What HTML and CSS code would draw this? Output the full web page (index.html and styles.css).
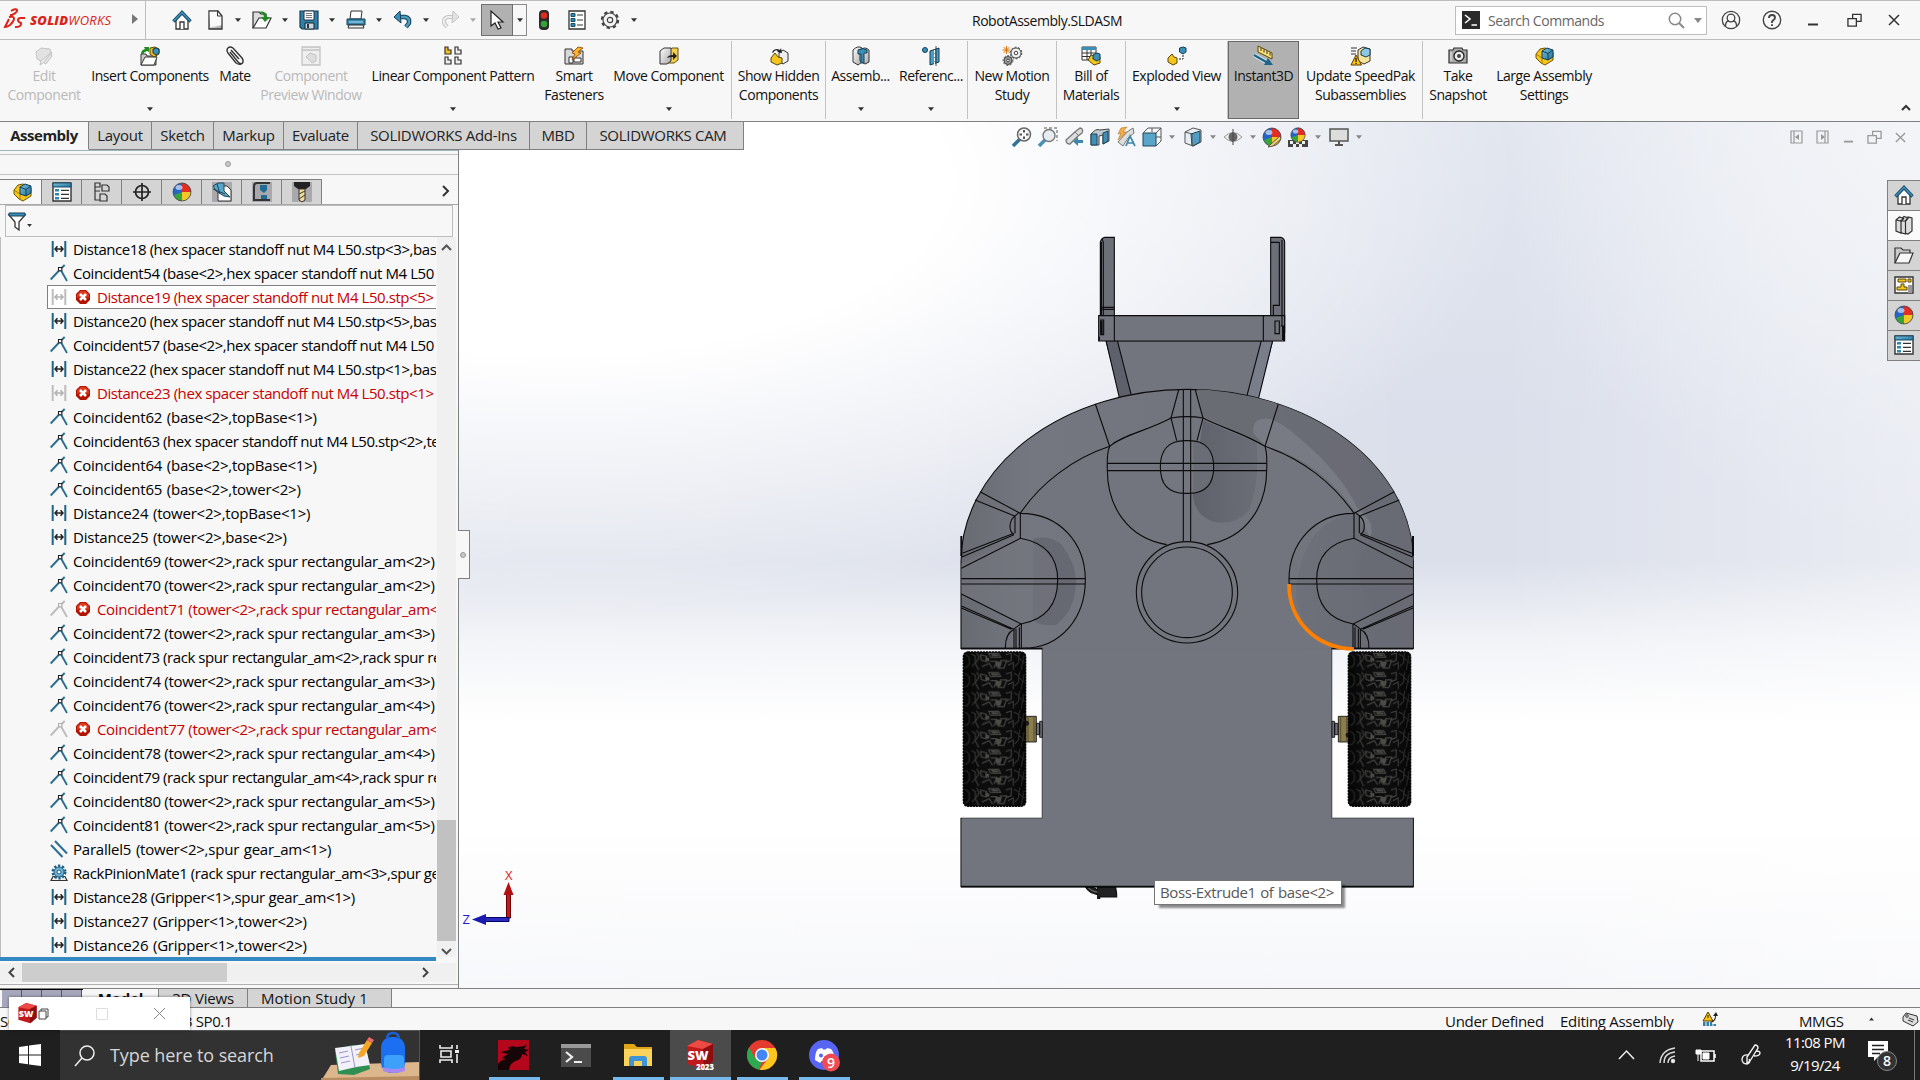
FILE: index.html
```html
<!DOCTYPE html>
<html lang="en">
<head>
<meta charset="utf-8">
<title>RobotAssembly.SLDASM</title>
<link rel="stylesheet" href="styles.css">
</head>
<body>
<svg class="defs" width="0" height="0">
  <defs>
    <linearGradient id="blue" x1="0" y1="0" x2="1" y2="1"><stop offset="0" stop-color="#7cc3e0"/><stop offset="1" stop-color="#1f6d94"/></linearGradient>
    <linearGradient id="steel" x1="0" y1="0" x2="1" y2="1"><stop offset="0" stop-color="#fff"/><stop offset="1" stop-color="#a8a8a8"/></linearGradient>
    <linearGradient id="body" x1="0" y1="0" x2="1" y2="0"><stop offset="0" stop-color="#696b73"/><stop offset=".15" stop-color="#74777f"/><stop offset=".6" stop-color="#71747c"/><stop offset="1" stop-color="#686a73"/></linearGradient>
    <linearGradient id="wheelshade" x1="0" y1="0" x2="1" y2="0"><stop offset="0" stop-color="#000" stop-opacity=".6"/><stop offset=".3" stop-color="#000" stop-opacity="0"/><stop offset=".7" stop-color="#000" stop-opacity="0"/><stop offset="1" stop-color="#000" stop-opacity=".6"/></linearGradient>
    <linearGradient id="ballshade" x1="0" y1="0" x2="1" y2="0"><stop offset="0" stop-color="#5d5f68" stop-opacity=".9"/><stop offset="1" stop-color="#686a73" stop-opacity=".7"/></linearGradient>
    <clipPath id="hull"><path d="M63 2000V1026A678.500 518 0 0 1 1420 1026V2000z"/></clipPath>
    <pattern id="tread" width="188" height="58" patternUnits="userSpaceOnUse">
      <rect width="188" height="58" fill="#0d0d0d"/>
      <g fill="none" stroke="#454543" stroke-width="3.500">
        <path d="M0 8h10l8 10v18l-8 10H0M24 6l12 6v20l-10 12M40 2l8 14-12 18 10 20M52 8l18 5v16l-16-4zM56 44l22-10 10 16M76 4h30l6 12H82zM112 26l-8 22h18l8-22zM82 28h18l-8 20M128 8l16-5v22l-14 5M134 40l16-8v22M152 6l14 8v18l-12 12M170 0l-4 18 12 10-4 26M188 12h-8v20h8"/>
      </g>
      <path d="M66 16l12 2v10l-12-2zM98 28l18 2-5 16-14-2zM84 6l20 1 3 6H86z" fill="#4b4b48"/>
    </pattern>
  </defs>
  <symbol id="dist" viewBox="0 0 18 18"><path d="M2.700 1v16M15.300 1v16" stroke="var(--m,#1d6587)" stroke-width="2"/><path d="M5 9h8M7.500 6.300 5 9l2.500 2.700M10.500 6.300 13 9l-2.500 2.700" fill="none" stroke="var(--n,#222)" stroke-width="1.500"/></symbol>
  <symbol id="coin" viewBox="0 0 18 18"><path d="M.7 15.500 10 5.500l4.700-4.500M10.500 5.500 17 17" stroke="var(--m,#2a6f92)" stroke-width="1.900" fill="none"/><path d="M8.500 3.500h3.300v3.300H8.500z" fill="#f7f7f7" stroke="var(--n,#222)" stroke-width="1.100"/></symbol>
  <symbol id="para" viewBox="0 0 18 18"><path d="m1 5 11.500 12M5 1l12 12.500" stroke="#2a6f92" stroke-width="2"/></symbol>
  <symbol id="rack" viewBox="0 0 18 18"><path d="M1 16.500h16l-2-4H3z" fill="#eee" stroke="#333" stroke-width="1.200"/><circle cx="9" cy="8" r="6" fill="none" stroke="#1f5f82" stroke-width="3" stroke-dasharray="2.200 1.600"/><circle cx="9" cy="8" r="5" fill="#6fb3d6" stroke="#1f5f82"/><circle cx="9" cy="8" r="2" fill="#f7f7f7" stroke="#1f5f82"/></symbol>
  <symbol id="err" viewBox="0 0 14 14"><path d="M4 0h6l4 4v6l-4 4H4l-4-4V4z" fill="#b31504"/><path d="M4.500 1h5L13 4.500v3H1v-3z" fill="#dc3a1c"/><path d="m4 4 6 6m0-6-6 6" stroke="#fff" stroke-width="2.600"/></symbol>
  <symbol id="down" viewBox="0 0 8 5"><path d="M0 0h8L4 5z" fill="currentColor"/></symbol>
  <symbol id="home" viewBox="0 0 20 20"><path d="M4 9v10h12V9l-6-6z" fill="#fff" stroke="#333" stroke-width="1.300"/><path d="M8 19v-7h4v7" fill="#fff" stroke="#333" stroke-width="1.300"/><path d="m1.500 11.500 8.500-9 8.500 9" fill="none" stroke="#1b4a66" stroke-width="3.400"/><path d="m1.800 11 8.200-8.600 8.200 8.600" fill="none" stroke="#3d8fb8" stroke-width="1.500"/></symbol>
  <symbol id="asm" viewBox="0 0 20 20"><path d="m2 8 4-5 5-1 8 4v8l-8 5-4-2-5-5z" fill="#f6c61c" stroke="#6d5300" stroke-width="1"/><path d="m2 8 6 4v6M8 12l3-2" fill="none" stroke="#a47c00"/><path d="m8 5 5-3 6 2v7l-5 3-6-2z" fill="url(#blue)" stroke="#123f58"/><path d="m8 5 6 2.500V14M14 7.500 19 4" stroke="#123f58" fill="none"/></symbol>
  <symbol id="ball" viewBox="0 0 20 20"><circle cx="10" cy="10" r="9" fill="#2463c8"/><path d="M10 10V1a9 9 0 0 1 9 9z" fill="#e32d22"/><path d="M10 10h9a9 9 0 0 1-9 9z" fill="#f4c62a"/><path d="M10 10v9a9 9 0 0 1-8-6z" fill="#37a53a"/><ellipse cx="7" cy="5.500" rx="3.500" ry="2.500" fill="#fff" opacity=".6"/><circle cx="10" cy="10" r="9" fill="none" stroke="#444" stroke-width=".8"/></symbol>
  <symbol id="list" viewBox="0 0 20 20"><path d="M1 1h18v18H1z" fill="#fff" stroke="#333" stroke-width="1.400"/><path d="M1 1h18v4H1z" fill="url(#blue)" stroke="#174f6d"/><path d="M3 7h4v2.500H3zM3 11h4v2.500H3zM3 15h4v2.500H3z" fill="#2f86b0"/><path d="M9 8.300h8M9 12.300h8M9 16.300h8" stroke="#333" stroke-width="1.200"/></symbol>
  <symbol id="folder" viewBox="0 0 20 20"><path d="M1 18V3h6l2 2h7v3" fill="#c9c9c9" stroke="#333" stroke-width="1.200"/><path d="m1 18 5-10h13l-4 10z" fill="#f8f8f8" stroke="#333" stroke-width="1.200"/></symbol>
  <symbol id="cyl" viewBox="0 0 20 20"><path d="M2 4q5-5 9-2v14l-4 3-5-3z" fill="url(#steel)" stroke="#333"/><path d="M9 4q5-4 9 0v12l-4 2-5-3z" fill="url(#steel)" stroke="#333"/></symbol>
  <symbol id="gear" viewBox="0 0 20 20"><circle cx="10" cy="10" r="8" fill="none" stroke="#444" stroke-width="2.400" stroke-dasharray="3.300 3"/><circle cx="10" cy="10" r="7" fill="#f4f4f4" stroke="#444" stroke-width="1.200"/><circle cx="10" cy="10" r="2.700" fill="none" stroke="#444" stroke-width="1.200"/></symbol>
  <symbol id="restore" viewBox="0 0 16 16"><path d="M1 6h9v8H1zM6 6V1.500h9V9h-5" fill="none" stroke="currentColor" stroke-width="1.400"/></symbol>
  <symbol id="cross" viewBox="0 0 12 12"><path d="m1 1 10 10M11 1 1 11" stroke="currentColor" stroke-width="1.500"/></symbol>
  <symbol id="minus" viewBox="0 0 12 12"><path d="M1 10.500h10" stroke="currentColor" stroke-width="2"/></symbol>
</svg>

<header class="titlebar">
  <div class="brand">
    <svg width="21" height="22" viewBox="0 0 21 22"><path d="M6 3q5-3 6-1t-5 5h-2M4 9q5-1 5 1.500T5 17q-3 2-5 2l4-8M20 10h-4q-3 0-3 2t3 3q1 4-6 4" fill="none" stroke="#da2419" stroke-width="2"/></svg>
    <span class="logo"><b>SOLID</b>WORKS</span>
    <svg class="play" width="6" height="10" viewBox="0 0 6 10"><path d="M0 0v10l6-5z" fill="#777"/></svg>
  </div>
  <nav class="qat">
    <svg class="i"><use href="#home"/></svg>
    <svg class="i" viewBox="0 0 20 20"><path d="M4 1h9l4 5v13H4z" fill="url(#steel)" stroke="#333" stroke-width="1.300"/><path d="M4.700 1.700h7.500l4 4.500v9l-11 2z" fill="#fafafa"/><path d="M12.500 1v5H17" fill="none" stroke="#333"/></svg><svg class="d"><use href="#down"/></svg>
    <svg class="i" viewBox="0 0 20 20"><path d="M1 18V2h6l2 2h5v4" fill="#ddd" stroke="#333" stroke-width="1.200"/><path d="m1 18 6-10h12l-5 10z" fill="#fff" stroke="#333" stroke-width="1.200"/><path d="M6 2q8-2 9 5h3l-5 5-4-5h3q0-4-6-5" fill="#1f8a1f"/></svg><svg class="d"><use href="#down"/></svg>
    <svg class="i" viewBox="0 0 20 20"><path d="M1 1h18v18H3l-2-2z" fill="#2f7fa6" stroke="#123f58" stroke-width="1.200"/><path d="M5 1h10v9H5z" fill="#fff" stroke="#234"/><path d="M7 3.500h6M7 5.500h6M7 7.500h6" stroke="#777"/><path d="M6 13h9v6H6z" fill="#cfd8dd" stroke="#123"/><path d="M8 14h2v4H8z" fill="#234"/></svg><svg class="d"><use href="#down"/></svg>
    <svg class="i" viewBox="0 0 20 20"><path d="M5 1h11l-1 8H4z" fill="#fff" stroke="#333"/><path d="M1 9h18v6H1z" fill="#3585ad" stroke="#123f58"/><path d="M3 12h14" stroke="#bfe3f3"/><path d="M3 15h14l1 3H2z" fill="#eee" stroke="#333"/></svg><svg class="d"><use href="#down"/></svg>
    <svg class="i" viewBox="0 0 20 20"><path d="M5 7h7q5 1 4 6l-3 4" fill="none" stroke="#153f58" stroke-width="4.500"/><path d="M5 7h7q5 1 4 6l-3 4" fill="none" stroke="#4a9cc4" stroke-width="2.500"/><path d="M1 7 7 1l1 12z" fill="#3b8eb6" stroke="#153f58"/></svg><svg class="d"><use href="#down"/></svg>
    <svg class="i" viewBox="0 0 20 20"><path d="M15 7H8q-5 1-4 6l3 4" fill="none" stroke="#c4c4c4" stroke-width="4"/><path d="M15 7H8q-5 1-4 6l3 4" fill="none" stroke="#eee" stroke-width="2"/><path d="m19 7-6-6-1 12z" fill="#e2e2e2" stroke="#c4c4c4"/></svg><svg class="d dim"><use href="#down"/></svg>
    <span></span>
    <span class="select"><svg width="14" height="20" viewBox="0 0 14 20"><path d="M1 1v15l4-3 3 6 3-1-3-6h5z" fill="#fff" stroke="#222" stroke-width="1.200"/></svg></span>
    <span class="selectmore"><svg class="d"><use href="#down"/></svg></span>
    <svg class="i" viewBox="0 0 20 20"><rect x="5" y="0" width="10" height="20" rx="4" fill="#2a2a2a"/><circle cx="10" cy="5.500" r="3.300" fill="#e02c1d"/><circle cx="10" cy="14" r="3.300" fill="#33a336"/></svg>
    <svg class="i" viewBox="0 0 20 20"><path d="M2 1h16v18H2z" fill="#fff" stroke="#333" stroke-width="1.300"/><path d="M4 3.500h4v3H4zM4 8.500h4v3H4zM4 13.500h4v3H4z" fill="#2f86b0" stroke="#174f6d"/><path d="M10 5h6M10 10h6M10 15h6" stroke="#333"/></svg>
    <svg class="i"><use href="#gear"/></svg><svg class="d"><use href="#down"/></svg>
  </nav>
  <h1 class="doc">RobotAssembly.SLDASM</h1>
  <div class="search">
    <svg width="18" height="18" viewBox="0 0 18 18"><path d="M0 0h18v18H0z" fill="#2a2a2a"/><path d="m3 4 5 4-5 4M9.500 14H15" fill="none" stroke="#fff" stroke-width="1.600"/></svg>
    <span>Search Commands</span>
    <svg width="17" height="17" viewBox="0 0 17 17"><circle cx="7" cy="7" r="5.700" fill="none" stroke="#888" stroke-width="1.500"/><path d="m11 11 5 5" stroke="#888" stroke-width="2"/></svg>
    <svg class="d grey"><use href="#down"/></svg>
  </div>
  <div class="winctl">
    <svg width="20" height="20" viewBox="0 0 20 20" fill="none" stroke="#444" stroke-width="1.300"><circle cx="10" cy="10" r="8.700"/><circle cx="10" cy="8" r="3.800"/><path d="M4.500 16q0-5 3.500-5M15.500 16q0-5-3.500-5"/></svg>
    <svg width="20" height="20" viewBox="0 0 20 20" fill="none" stroke="#444" stroke-width="1.400"><circle cx="10" cy="10" r="8.700"/><path d="M7 8q0-3 3-3t3 2.500q0 1.500-1.500 2.500T10 12v1M10 14.200v1.700" stroke-width="1.900"/></svg>
    <svg width="14" height="12"><use href="#minus"/></svg>
    <svg width="15" height="15"><use href="#restore"/></svg>
    <svg width="12" height="12"><use href="#cross"/></svg>
  </div>
</header>

<section class="ribbon">
  <div class="cmd off"><svg class="i" viewBox="0 0 20 20"><path d="m2 6 5-4 9 1 2 7-6 8-9-5z" fill="#e2e2e2" stroke="#c6c6c6"/><path d="m18 6-9 11-3 2 1-4z" fill="#f3f3f3" stroke="#c0c0c0"/></svg><span>Edit<br>Component</span></div>
  <div class="cmd"><svg class="i" viewBox="0 0 20 20"><path d="M1 19V8h5l1 2h9v9z" fill="#ccc" stroke="#333"/><path d="m1 19 4-8h12l-3 8z" fill="#fff" stroke="#333"/><path d="M1 8q0-4 4-5l-1-2h5v5L7 5Q4 6 3 8z" fill="#1f8a1f"/><path d="m10 2 5-1 4 2v5l-5 3-4-3z" fill="#f0bd1a" stroke="#5b4600"/><path d="m13 3 3-1 3 1v4l-3 2-3-2z" fill="#3b8eb6" stroke="#123f58"/></svg><span>Insert Components</span><svg class="d"><use href="#down"/></svg></div>
  <div class="cmd"><svg class="i" viewBox="0 0 20 20"><path d="m5 6 8 10q3 3 4.500 1t-.5-5L8 2Q5 0 3 2t0 5l8 10q3 2 5 1M6 4l8 9" fill="none" stroke="#333" stroke-width="1.400"/></svg><span>Mate</span></div>
  <div class="cmd off"><svg class="i" viewBox="0 0 20 20"><path d="M1 1h18v18H1zM1 4h18" fill="#eee" stroke="#c4c4c4" stroke-width="1.300"/><path d="m5 11 4-4 6 2v6l-4 2z" fill="#ddd" stroke="#c4c4c4"/></svg><span>Component<br>Preview Window</span></div>
  <div class="cmd"><svg class="i" viewBox="0 0 20 20" fill="#eee" stroke="#333" stroke-width="1.200"><path d="M2 1h3v3h3v4H2z" fill="#f3c51e"/><path d="M12 1h3v3h3v4h-6zM2 11h3v3h3v4H2zM12 11h3v3h3v4h-6z"/></svg><span>Linear Component Pattern</span><svg class="d"><use href="#down"/></svg></div>
  <div class="cmd"><svg class="i" viewBox="0 0 20 20"><path d="M1 3h7v2h11v13H1z" fill="#d8d8d8" stroke="#333"/><path d="M5 11h4v6H5zM10 12h7v4h-7z" fill="#fff" stroke="#333"/><path d="m14 1 5 1-5 4 3 1-9 7 3-6-3-1z" fill="#f7b52a" stroke="#8c3c00" stroke-width=".8"/></svg><span>Smart<br>Fasteners</span></div>
  <div class="cmd sep"><svg class="i" viewBox="0 0 20 20"><path d="m9 5 4-3h6v12l-4 3H9z" fill="#f4cf58" stroke="#6b5300"/><path d="m1 5 4-3h7v13l-4 3H1z" fill="url(#steel)" stroke="#333"/><path d="M8 12q1-3 6-3V6l4 4-4 4v-3q-4 0-6 1" fill="#222"/></svg><span>Move Component</span><svg class="d"><use href="#down"/></svg></div>
  <div class="cmd sep"><svg class="i" viewBox="0 0 20 20"><path d="m10 7 4-3 5 3v8l-5 3-4-3z" fill="#eee" stroke="#333"/><path d="m2 12 4-5 3 4 4 1v5l-5 2-6-3z" fill="#f3c51e" stroke="#5b4600"/><path d="M3 6q3-5 8-2l1-2 1 5-5-1 1-1Q6 3 4 7z" fill="#222"/></svg><span>Show Hidden<br>Components</span></div>
  <div class="cmd"><svg class="i" viewBox="0 0 20 20"><use href="#cyl"/><path d="M7 4q5-3 9 0v3h-3v10h-3V8H7z" fill="#3b8eb6" stroke="#123f58"/></svg><span>Assemb...</span><svg class="d"><use href="#down"/></svg></div>
  <div class="cmd sep"><svg class="i" viewBox="0 0 20 20"><circle cx="4" cy="4" r="2.500" fill="#3b8eb6" stroke="#123f58"/><path d="m9 5 9-3v14l-9 3z" fill="#4a9cc4" stroke="#123f58"/><path d="M13.500 0v20" stroke="#fff" stroke-dasharray="3 1"/><path d="M15 0v20" stroke="#222" stroke-width=".8"/></svg><span>Referenc...</span><svg class="d"><use href="#down"/></svg></div>
  <div class="cmd sep"><svg class="i" viewBox="0 0 20 20"><path d="M4.500 0v8M.5 4h8M1.700 1.200l5.600 5.600M7.300 1.200 1.700 6.800" stroke="#d8750f"/><g fill="none" stroke="#444"><circle cx="14" cy="7" r="5" fill="#f4f4f4"/><circle cx="14" cy="7" r="5.800" stroke-dasharray="2 1.600"/><circle cx="14" cy="7" r="1.800"/><circle cx="6" cy="14.500" r="4" fill="#999"/><circle cx="6" cy="14.500" r="4.900" stroke-dasharray="2 1.600"/><circle cx="6" cy="14.500" r="1.300" fill="#fff"/></g></svg><span>New Motion<br>Study</span></div>
  <div class="cmd sep"><svg class="i" viewBox="0 0 20 20"><path d="M1 1h14v13H1z" fill="#fff" stroke="#333"/><path d="M1 1h14v3H1z" fill="#3b8eb6"/><path d="M1 7h14M1 10.500h14M6 4v10M10 4v10" stroke="#333"/><path d="m7 14 3-5 9 2v6l-6 2z" fill="#f3c51e" stroke="#5b4600"/><path d="m12 9 4-2 3 1v5l-3 2-4-2z" fill="#3b8eb6" stroke="#123f58"/></svg><span>Bill of<br>Materials</span></div>
  <div class="cmd sep"><svg class="i" viewBox="0 0 20 20"><path d="m1 12 4-4 2 3 3 1v5l-4 2-5-3z" fill="#f3c51e" stroke="#5b4600"/><path d="m12.500 2 3.500-1 3 1v4l-3 2-3.500-2z" fill="#3b8eb6" stroke="#123f58"/><path d="M16 9v4h-5" stroke="#222" fill="none" stroke-dasharray="2 1"/></svg><span>Exploded View</span><svg class="d"><use href="#down"/></svg></div>
  <div class="cmd on"><svg class="i" viewBox="0 0 20 20"><path d="m4 0 14 7v6L4 6z" fill="#f8e27a" stroke="#5b4600"/><path d="M7 2v3M10 3.500v3M13 5v3M16 6.500v3" stroke="#333"/><path d="m0 9 14 8" stroke="#dff0f8" stroke-width="4"/><path d="m0 9 14 8" stroke="#1e6488" stroke-width="2.500"/><path d="m14 12 5 7h-9z" fill="#1e6488"/></svg><span>Instant3D</span></div>
  <div class="cmd sep"><svg class="i" viewBox="0 0 20 20"><path d="M0 2h6M0 5h5M0 8h5" stroke="#333"/><path d="m7 4 5-3 7 2v12l-6 3-6-3z" fill="#f7e39a" stroke="#333"/><path d="m10 5 4-3 5 1v6l-4 2-5-2z" fill="#8cc8e4" stroke="#123f58"/><path d="m5 9 5.500 10H0z" fill="#f9c513" stroke="#5b3600"/><path d="M5 12v4M5 17v1" stroke="#222" stroke-width="1.400"/></svg><span>Update SpeedPak<br>Subassemblies</span></div>
  <div class="cmd"><svg class="i" viewBox="0 0 20 20"><path d="M1 4h4l1-2h8l1 2h4v13H1z" fill="#aaa" stroke="#333" stroke-width="1.200"/><circle cx="11" cy="10" r="5" fill="#eee" stroke="#222" stroke-width="1.300"/><circle cx="11" cy="10" r="2" fill="#444"/><path d="M3 6v9" stroke="#eee"/></svg><span>Take<br>Snapshot</span></div>
  <div class="cmd"><svg class="i"><use href="#asm"/></svg><span>Large Assembly<br>Settings</span></div>
  <div class="collapse"><svg width="10" height="7" viewBox="0 0 10 7"><path d="m1 6 4-4 4 4" fill="none" stroke="#333" stroke-width="2"/></svg></div>
</section>

<main class="work">
  <svg class="scene" viewBox="0 122 1920 866" width="1920" height="866">
    <g transform="translate(940 220) scale(.33333)" fill="none" stroke="#0c0c0e" stroke-width="3.300">
      <g fill="#6d6f78">
        <path d="M481 290V66q4-12 14-14h28v238zM992 290V52h30q12 4 12 14v270l-42-10z"/>
        <path d="M498 362h500l-46 172H542z" fill="#72757d"/>
        <path d="M498 362h34l46 180-36 8z" fill="#5e606b"/><path d="M998 362h-34l-47 180 35 8z" fill="#7a7d8a"/>
        <path d="M476 287h558v76H476z" fill="#72757d"/>
      </g>
      <path d="M490 66v220M486 56l5 14M481 268h42M481 262h42M1018 66v190h-18v30M1026 60v260M992 67h26M523 287v76M970 287v76M482 300h9v44h-9zM1005 303h13v38h-13zM1022 318h12M1028 320v40M478 350v12" />
      <path d="M483 66v222M1032 318v44M485 302v40" stroke-width="6"/>
      <path d="M63 2000V1795h244V1285H63V1026A678.500 518 0 0 1 1420 1026V1285H1175V1795h245v205z" fill="url(#body)"/>
      <path d="M307 1285h868v510h243v203H65v-203h242z" fill="#72757e" stroke="none"/>
      <g clip-path="url(#hull)" stroke="none">
        <path d="M241 880Q350 730 509 680q62-20 232-90 150 60 234 88 160 50 272 202-160 20-180 240 20 165 174 165H241Q430 1270 436 1080 420 910 241 880z" fill="#72757d"/>
        <path d="M770 500l20 90q30 10 185 90l40-130V500z" fill="#6a6c74"/>
        <path d="M1015 540q250 90 405 280v465h-162q60-20 55-90-60-90-60-170 60-90 40-130Q1160 740 975 680z" fill="#696b74" opacity=".75"/>
        <path d="M940 640q-5-50 50-44 30 10 60 35 150 120 200 230 60 50 40 90l-40-70q-110-160-275-203z" fill="#787b83"/>
        <path d="M790 600q90 40 160 68 10 130-25 205-40 45-105 32-60-20-62-90z" fill="url(#ballshade)"/>
        <circle cx="741" cy="741" r="80" fill="#74777f"/>
        <path d="M760 665q60 10 62 76-2 60-62 78z" fill="#6b6d76"/>
        <path d="M280 955q55-10 85 20 40 50 43 105 0 90-60 135-60 5-70-20z" fill="#63656f" opacity=".8"/>
        <path d="M64 1030l175-75q110 30 114 125 0 110-110 130L64 1120z" fill="#74777f" opacity=".6"/>
      </g>
      <path d="M466 552l43 127q-9 20-7 70c0 110 60 205 178 225M1015 552l-40 127q7 20 5 70c0 110-60 205-178 225"/>
      <path d="M509 679c40-35 110-45 184-85q50-8 96 0c70 35 120 45 186 85M241 880C300 790 400 715 509 679M1242 880C1180 790 1085 715 975 679"/>
      <path d="M716 510l-23 84 17 68M766 510l23 84-18 68M730 508v455M752 508v455M502 730h478M502 752h478"/>
      <path d="M735 662h12c50 0 74 30 74 79 0 50-24 79-74 79h-12c-50 0-74-29-74-79 0-49 24-79 74-79z"/>
      <circle cx="741" cy="1117" r="152"/><circle cx="741" cy="1117" r="136"/>
      <g id="pod">
        <path d="M120 815l121 65C360 880 436 970 436 1080c0 110-70 205-188 205M105 840l117 47"/>
        <path d="M225 885v55M241 880v75M235 880q-25 15-25 38 0 20 12 25M67 1000l155-60M64 1012l158-68M64 1045l177-90q112 20 112 125 0 112-110 132M64 1076h372M64 1092h372"/>
        <path d="M64 1122l180 90v73M64 1158l158 70v57M220 1228l22-16M222 1228q-26 12-26 57M64 1164l150 64M228 1226v59M238 1222v63"/>
      </g>
      <use href="#pod" transform="translate(1483 0) scale(-1 1)"/>
      <path d="M64 948v60M1419 948v60" stroke-width="6"/>
      <path d="M63 1286h244M1175 1286h245M63 2000h1357" stroke-width="5"/>
      <path d="M1047 1092c0 110 80 192 195 195" stroke="#ff8000" stroke-width="11"/>
      <g stroke-width="2.500">
        <path d="M256 1489h33v77h-33zM1195 1489h33v77h-33z" fill="#8c7d4e"/>
        <path d="M264 1489v77M282 1489v77M1202 1489v77M1220 1489v77" stroke="#4d4424"/>
        <circle cx="260" cy="1510" r="6" fill="#222"/><circle cx="1224" cy="1545" r="6" fill="#222"/>
        <path d="M289 1510h10v34h-10zM299 1504h8v48h-8zM1184 1510h10v34h-10zM1176 1504h8v48h-8z" fill="#6d7075"/>
      </g>
      <g stroke="#0a0a0a" stroke-width="4" stroke-dasharray="7 2">
        <g transform="translate(70 1296)"><rect width="187" height="463" rx="14" fill="url(#tread)"/><rect width="187" height="463" rx="14" fill="url(#wheelshade)" stroke="none"/></g>
        <g transform="translate(1225 1296)"><rect width="187" height="463" rx="14" fill="url(#tread)"/><rect width="187" height="463" rx="14" fill="url(#wheelshade)" stroke="none"/></g>
      </g>
      <path d="M437 2002q10 18 36 22v11h6v-4h51v-10l-3-19h-54v8q-10-6-14-8z" fill="#222"/><path d="M446 2004q8 10 26 12" stroke="#777"/>
    </g>
    <path d="M506.500 918v-26h4v26z" fill="#c41a1a" stroke="#600"/><path d="m508.500 882 5 13h-10z" fill="#b01010"/>
    <path d="M509 917.500h-24v4h24z" fill="#2a2ac0" stroke="#006"/><path d="m472 919.500 14-5.500v11z" fill="#1a1ab0"/>
    <text x="505" y="880" class="axis" fill="#e02020">X</text><text x="462.500" y="924" class="axis" fill="#2020d0">Z</text>
  </svg>
  <div class="toprow">
    <nav class="tabs"><b>Assembly</b><span>Layout</span><span>Sketch</span><span>Markup</span><span>Evaluate</span><span>SOLIDWORKS Add-Ins</span><span>MBD</span><span class="cam">SOLIDWORKS CAM</span></nav>
    <div class="hud">
      <svg class="i" viewBox="0 0 20 20"><path d="m1 19 7-7" stroke="#2f7399" stroke-width="3.500"/><circle cx="12" cy="7.500" r="6.500" fill="#f6f6f6" stroke="#666" stroke-width="1.500"/><path d="M12 3v9M7.500 7.500h9" stroke="#555" stroke-width="2" stroke-dasharray="2.500 4"/></svg>
      <svg class="i" viewBox="0 0 20 20"><path d="M6 1h13v13" fill="none" stroke="#555" stroke-dasharray="3 2"/><path d="m1 19 6-6" stroke="#4a8fb5" stroke-width="3.500"/><circle cx="11" cy="8.500" r="6" fill="#e6edf2" stroke="#777" stroke-width="1.400"/></svg>
      <svg class="i" viewBox="0 0 20 20"><path d="m2 13 10-9 4-3q4 1 2 5l-4 3-8 8q-4 0-4-4z" fill="#ddd" stroke="#777" stroke-width="1.300"/><path d="m11 5 4 4" stroke="#777"/><path d="M19 16h-5v3l-5-4.500 5-4.500v3h5z" fill="#3f86ab"/></svg>
      <svg class="i" viewBox="0 0 20 20"><path d="M1 7q5-6 9-4l9-1v12l-6 3v-9L9 9v9H1z" fill="#bfcbd3" stroke="#444"/><path d="M1 7h6v11H1zM13 6l5-2v10l-5 3z" fill="#3f8fb8" stroke="#245"/></svg>
      <svg class="i" viewBox="0 0 20 20"><path d="m2 15 9-10 6-4 1 5-6 5-5 8z" fill="#ddd" stroke="#777"/><path d="m5 1 6-1-4 5 4 0-9 8 3-7-3 1z" fill="#f3b04a" stroke="#b07020" stroke-width=".6"/><path d="m10 19 4-10 5 10M12 16h5" fill="none" stroke="#3f86ab" stroke-width="1.700"/></svg>
      <svg class="i" viewBox="0 0 20 20"><path d="M1 6h13v13H1z" fill="#5aa6cb" stroke="#245"/><path d="m1 6 5-5h13v13l-5 5M14 6l5-5M10 1v4M14 10h5" fill="none" stroke="#555"/></svg><svg class="d grey"><use href="#down"/></svg>
      <svg class="i" viewBox="0 0 20 20"><path d="m2 5 8-4 8 2v12l-8 4-8-3z" fill="#e6eef3" stroke="#555"/><path d="m8 7 9-3v11l-7 4-1-.5z" fill="#4f9dc4" stroke="#245"/><path d="m2 5 7 2v12" fill="none" stroke="#555"/></svg><svg class="d grey"><use href="#down"/></svg>
      <svg class="i" viewBox="0 0 20 20"><path d="M1 10q9-9 18 0-9 9-18 0z" fill="#eee" stroke="#999"/><circle cx="10" cy="10" r="4.500" fill="#666"/><path d="M10 2v16" stroke="#444"/></svg><svg class="d grey"><use href="#down"/></svg>
      <svg class="i" viewBox="0 0 20 20"><use href="#ball"/><path d="m18 9-9 8-3 3 5-1 8-7z" fill="#e9d17a" stroke="#654" /></svg>
      <svg class="i" viewBox="0 0 20 20"><path d="M0 13h20v7H0z" fill="#444"/><path d="M2 14h3v3H2zM8 14h3v3H8zM14 14h3v3h-3zM5 17h3v3H5zM11 17h3v3h-3z" fill="#eee"/><use href="#ball" x="2" width="16" height="16"/></svg><svg class="d grey"><use href="#down"/></svg>
      <svg class="i" viewBox="0 0 20 20"><path d="M1 2h18v12H1z" fill="#ddd" stroke="#555" stroke-width="1.500"/><path d="M10 14v4M6 18h8" stroke="#555" stroke-width="2"/></svg><svg class="d grey"><use href="#down"/></svg>
    </div>
    <div class="docctl">
      <svg width="13" height="14" viewBox="0 0 13 14"><path d="M1 1h11v12H1zM4 1v12" fill="none" stroke="currentColor" stroke-width="1.200"/><path d="M9 4v6L5 7z" fill="currentColor"/></svg>
      <svg width="13" height="14" viewBox="0 0 13 14"><path d="M1 1h11v12H1zM9 1v12" fill="none" stroke="currentColor" stroke-width="1.200"/><path d="M5 4v6l4-3z" fill="currentColor"/></svg>
      <svg width="11" height="11"><use href="#minus"/></svg><svg width="15" height="15"><use href="#restore"/></svg><svg width="11" height="11"><use href="#cross"/></svg>
    </div>
  </div>

  <aside class="panel">
    <div class="grip"><i class="dot"></i></div>
    <nav class="ptabs">
      <span class="cur"><svg class="i"><use href="#asm"/></svg></span>
      <span><svg class="i"><use href="#list"/></svg></span>
      <span><svg class="i" viewBox="0 0 20 20" fill="none" stroke="#333" stroke-width="1.200"><path d="M3 1h5v4H3zM3 5v13h5M3 9h5M10 3h5l2 2v4h-7zM8 12h5l2 2v5H8z"/></svg></span>
      <span><svg class="i" viewBox="0 0 20 20" fill="none" stroke="#222" stroke-width="1.700"><circle cx="10" cy="10" r="6.500"/><path d="M10 1v18M1 10h18"/></svg></span>
      <span><svg class="i"><use href="#ball"/></svg></span>
      <span class="shade"><svg class="i" viewBox="0 0 20 20"><path d="M6 4h9l4 4v11H6z" fill="#fff" stroke="#333"/><path d="m1 4 5-3h6v8l6 6-6-1-8-5z" fill="#5aa6cb" stroke="#245"/><path d="m5 2 3 10M1 7l12 5" stroke="#245"/></svg></span>
      <span class="shade"><svg class="i" viewBox="0 0 20 20"><path d="M18 1H5Q2 1 2 5v13h16" fill="none" stroke="#333" stroke-width="2"/><path d="M8 3h7v5l-3 3-4-3zM9 13h6v4H9z" fill="#1f6d94"/></svg></span>
      <span class="shade"><svg class="i" viewBox="0 0 20 20"><path d="M2 0h16v4l-4 3H6L2 4z" fill="#222"/><path d="M7 7h6v11l-3 2-3-2z" fill="#f0dc9a" stroke="#333"/><path d="m7 12 6-3M7 17l6-4" stroke="#333"/></svg></span>
      <svg class="more" width="8" height="12" viewBox="0 0 8 12"><path d="m1 1 5 5-5 5" fill="none" stroke="#333" stroke-width="2"/></svg>
    </nav>
    <div class="filter"><svg width="18" height="19" viewBox="0 0 18 19"><path d="M1 3h16l-6 7v8l-4-3v-5z" fill="#fff" stroke="#333" stroke-width="1.300"/><path d="M1 1h16v3H1z" fill="#3b8eb6" stroke="#123f58"/></svg><svg width="5" height="3"><use href="#down"/></svg></div>
    <div class="treebox">
      <ul class="tree">
        <li class="dense"><svg><use href="#dist"/></svg>Distance18 (hex spacer standoff nut M4 L50.stp&lt;3&gt;,bas</li>
        <li class="dense"><svg><use href="#coin"/></svg>Coincident54 (base&lt;2&gt;,hex spacer standoff nut M4 L50</li>
        <li class="bad sel dense"><svg><use href="#dist"/></svg><svg class="e"><use href="#err"/></svg>Distance19 (hex spacer standoff nut M4 L50.stp&lt;5&gt;</li>
        <li class="dense"><svg><use href="#dist"/></svg>Distance20 (hex spacer standoff nut M4 L50.stp&lt;5&gt;,bas</li>
        <li class="dense"><svg><use href="#coin"/></svg>Coincident57 (base&lt;2&gt;,hex spacer standoff nut M4 L50</li>
        <li class="dense"><svg><use href="#dist"/></svg>Distance22 (hex spacer standoff nut M4 L50.stp&lt;1&gt;,bas</li>
        <li class="bad dense"><svg><use href="#dist"/></svg><svg class="e"><use href="#err"/></svg>Distance23 (hex spacer standoff nut M4 L50.stp&lt;1&gt;</li>
        <li><svg><use href="#coin"/></svg>Coincident62 (base&lt;2&gt;,topBase&lt;1&gt;)</li>
        <li class="dense"><svg><use href="#coin"/></svg>Coincident63 (hex spacer standoff nut M4 L50.stp&lt;2&gt;,te</li>
        <li><svg><use href="#coin"/></svg>Coincident64 (base&lt;2&gt;,topBase&lt;1&gt;)</li>
        <li><svg><use href="#coin"/></svg>Coincident65 (base&lt;2&gt;,tower&lt;2&gt;)</li>
        <li><svg><use href="#dist"/></svg>Distance24 (tower&lt;2&gt;,topBase&lt;1&gt;)</li>
        <li><svg><use href="#dist"/></svg>Distance25 (tower&lt;2&gt;,base&lt;2&gt;)</li>
        <li class="snug"><svg><use href="#coin"/></svg>Coincident69 (tower&lt;2&gt;,rack spur rectangular_am&lt;2&gt;)</li>
        <li class="snug"><svg><use href="#coin"/></svg>Coincident70 (tower&lt;2&gt;,rack spur rectangular_am&lt;2&gt;)</li>
        <li class="bad snug"><svg><use href="#coin"/></svg><svg class="e"><use href="#err"/></svg>Coincident71 (tower&lt;2&gt;,rack spur rectangular_am&lt;</li>
        <li class="snug"><svg><use href="#coin"/></svg>Coincident72 (tower&lt;2&gt;,rack spur rectangular_am&lt;3&gt;)</li>
        <li class="dense"><svg><use href="#coin"/></svg>Coincident73 (rack spur rectangular_am&lt;2&gt;,rack spur re</li>
        <li class="snug"><svg><use href="#coin"/></svg>Coincident74 (tower&lt;2&gt;,rack spur rectangular_am&lt;3&gt;)</li>
        <li class="snug"><svg><use href="#coin"/></svg>Coincident76 (tower&lt;2&gt;,rack spur rectangular_am&lt;4&gt;)</li>
        <li class="bad snug"><svg><use href="#coin"/></svg><svg class="e"><use href="#err"/></svg>Coincident77 (tower&lt;2&gt;,rack spur rectangular_am&lt;</li>
        <li class="snug"><svg><use href="#coin"/></svg>Coincident78 (tower&lt;2&gt;,rack spur rectangular_am&lt;4&gt;)</li>
        <li class="dense"><svg><use href="#coin"/></svg>Coincident79 (rack spur rectangular_am&lt;4&gt;,rack spur re</li>
        <li class="snug"><svg><use href="#coin"/></svg>Coincident80 (tower&lt;2&gt;,rack spur rectangular_am&lt;5&gt;)</li>
        <li class="snug"><svg><use href="#coin"/></svg>Coincident81 (tower&lt;2&gt;,rack spur rectangular_am&lt;5&gt;)</li>
        <li><svg><use href="#para"/></svg>Parallel5 (tower&lt;2&gt;,spur gear_am&lt;1&gt;)</li>
        <li class="dense"><svg><use href="#rack"/></svg>RackPinionMate1 (rack spur rectangular_am&lt;3&gt;,spur ge</li>
        <li class="snug"><svg><use href="#dist"/></svg>Distance28 (Gripper&lt;1&gt;,spur gear_am&lt;1&gt;)</li>
        <li><svg><use href="#dist"/></svg>Distance27 (Gripper&lt;1&gt;,tower&lt;2&gt;)</li>
        <li><svg><use href="#dist"/></svg>Distance26 (Gripper&lt;1&gt;,tower&lt;2&gt;)</li>
      </ul>
      <div class="vscroll">
        <svg width="11" height="7" viewBox="0 0 11 7"><path d="m1 6 4.500-4.500L10 6" fill="none" stroke="#555" stroke-width="2"/></svg>
        <i></i>
        <svg class="last" width="11" height="7" viewBox="0 0 11 7"><path d="m1 1 4.500 4.500L10 1" fill="none" stroke="#555" stroke-width="2"/></svg>
      </div>
    </div>
    <div class="hscroll">
      <svg width="7" height="11" viewBox="0 0 7 11"><path d="M6 1 1.500 5.500 6 10" fill="none" stroke="#444" stroke-width="2"/></svg>
      <i></i>
      <svg width="7" height="11" viewBox="0 0 7 11"><path d="m1 1 4.500 4.500L1 10" fill="none" stroke="#444" stroke-width="2"/></svg>
    </div>
    <div class="pfoot"></div>
  </aside>
  <div class="splitter"><i class="dot"></i></div>
  <nav class="taskpane">
    <span><svg class="i"><use href="#home"/></svg></span>
    <span class="cur"><svg class="i" viewBox="0 0 20 20" fill="#ddd" stroke="#333" stroke-width="1.200"><path d="m11 5 3-3 4 1v13l-4 3-3-1z"/><path d="m6.500 5 3.500-3.500 4 1.500-2.500 3v13l-5-1.500z"/><path d="m2 5 3.500-3 4 1.500L7 6v12l-5-2z"/><path d="M2 5l5 1 2.500-2.500M7 6l4.500 0L14 3" fill="none"/></svg></span>
    <span><svg class="i"><use href="#folder"/></svg></span>
    <span><svg class="i" viewBox="0 0 20 20"><path d="M1 2h18v16H1z" fill="#fff" stroke="#333" stroke-width="1.400"/><path d="M4 4h8v3H4zM14 4h3v3h-3zM7 9h3v3h3v3H3v-3h4z" fill="#f3c51e" stroke="#5b4600"/><path d="M14 10h4v8h-4z" fill="#999"/></svg></span>
    <span><svg class="i"><use href="#ball"/></svg></span>
    <span><svg class="i"><use href="#list"/></svg></span>
  </nav>
  <div class="tip">Boss-Extrude1 of base&lt;2&gt;</div>
</main>

<nav class="sheets"><div class="arrows"><i></i><i></i><i></i><i></i></div><b>Model</b><span>3D Views</span><span class="study">Motion Study 1</span></nav>
<footer class="status"><span>SOLIDWORKS Premium 2023 SP0.1</span><span class="s1">Under Defined</span><span class="s2">Editing Assembly</span>
  <svg class="s3" width="16" height="15" viewBox="0 0 16 15"><path d="M6 0l5 9H1z" fill="#f9c513" stroke="#5b3600"/><path d="M6 3v3" stroke="#222"/><path d="M8 10q5-1 5-6h-2l3-4 2 4h-2q0 6-6 7z" fill="#222"/><path d="M1 13h14M1 11h9" stroke="#2f7fa6" stroke-width="2" stroke-dasharray="2.500 1"/></svg>
  <span class="s4">MMGS</span><svg class="s5" width="5" height="4" viewBox="0 0 8 5"><path d="M0 5h8L4 0z" fill="#333"/></svg>
  <svg class="s6" width="17" height="15" viewBox="0 0 17 15"><path d="m1 5 3-4 11 3 1 6-5 4L1 9z" fill="#ddd" stroke="#333"/><circle cx="5" cy="4" r="1.300" fill="#fff" stroke="#333"/><path d="m7 6 5 2M6 8l5 2" stroke="#333"/></svg>
</footer>

<footer class="taskbar">
  <svg class="win" width="22" height="22" viewBox="0 0 22 22"><path d="M0 3l9-1.300V10.500H0zM10 1.600 22 0v10.500H10zM0 11.500h9v8.800L0 19zM10 11.500h12V22l-12-1.600z" fill="#fff"/></svg>
  <div class="tsearch">
    <svg width="22" height="22" viewBox="0 0 22 22"><circle cx="13" cy="8" r="7" fill="none" stroke="#eee" stroke-width="1.500"/><path d="m8 13-7 8" stroke="#eee" stroke-width="1.500"/></svg>
    <span>Type here to search</span>
    <svg class="art" width="98" height="50" viewBox="0 0 98 50"><path d="m10 34 88-3v19H0z" fill="#dcb68d"/><path d="m0 47 98-2v5H0z" fill="#b98d62"/><path d="m14 19 17-5 14 2 4 22-16 6-16-1z" fill="#2f8f52"/><path d="m14 17 16-2 14-2 5 21-14 2-17 4z" fill="#f2f1fa"/><path d="m30 15 4 22M18 22l9-2M19 27l9-2M20 32l9-2M34 19l9-2M35 24l9-2" stroke="#9a94c4"/><path d="M38 22 46 9l5 3-8 13-6 2z" fill="#f5a623"/><path d="m46 9 2-3 5 3-2 3z" fill="#ef6a6a"/><rect x="60" y="6" width="24" height="36" rx="10" fill="#1b6ff0"/><path d="M66 8q0-6 6-6t6 6" fill="none" stroke="#1b5fd0" stroke-width="2.500"/><rect x="63" y="24" width="20" height="14" rx="4" fill="#3da0fb"/><path d="M62 36q10 4 22 0v4q-11 4-22 0z" fill="#a48af2"/></svg>
  </div>
  <span class="app view"><svg width="22" height="20" viewBox="0 0 22 20" fill="none" stroke="#eee" stroke-width="1.600"><path d="M1 1v3h12V1M1 19v-3h12v3M2 7h10v6H2zM18 1v4M18 10v9"/><path d="M16 7.500h4" stroke-width="3"/></svg></span>
  <span class="app run first"><svg width="31" height="30" viewBox="0 0 31 30"><path d="M0 0h31v30H0z" fill="#b5071b"/><path d="M2 12q7-1 10-3l-2-1q4-3 8-1 6 0 11-2l-3 4 5 1-4 2 3 4-6-2q0 4-4 6-8 2-9 10H0V24q2-4 8-5l-4-1q4-3 6-4-4-1-8-2z" fill="#160608"/></svg></span>
  <span class="app"><svg width="30" height="23" viewBox="0 0 30 23"><path d="M0 0h30v23H0z" fill="#4b4b4b"/><path d="M0 0h30v4H0z" fill="#999"/><path d="m5 8 6 5-6 5M13 18h8" fill="none" stroke="#eee" stroke-width="2.200"/></svg></span>
  <span class="app run"><svg width="28" height="24" viewBox="0 0 28 24"><path d="M0 1h10l3 3h15v5H0z" fill="#e0a417"/><path d="M0 6h28v17H0z" fill="#fbd35a"/><path d="M5 23v-7q0-3 3-3h12q3 0 3 3v7h-5v-5h-8v5z" fill="#3d94d6"/></svg></span>
  <span class="app run hot"><svg width="30" height="30" viewBox="0 0 30 30"><path d="m2 6 11-6 15 4v17l-9 8L2 24z" fill="#c11a1d"/><path d="m2 6 11-6 15 4-10 5z" fill="#ee4a45"/><path d="m18 9 10-5v17l-9 8z" fill="#8d0d10"/><text x="2.500" y="20" class="swtext">SW</text><text x="11" y="29.500" class="swyear">2023</text></svg></span>
  <span class="app run"><svg width="30" height="30" viewBox="0 0 30 30"><circle cx="15" cy="15" r="15" fill="#e33b2e"/><path d="M2 7.500 8.500 18.700 15 22l-3 7.700A15 15 0 0 1 2 7.500z" fill="#2da94f"/><path d="M15 8h13.300A15 15 0 0 1 12.500 29.800L21.500 18z" fill="#fcc61f"/><circle cx="15" cy="15" r="7" fill="#fff"/><circle cx="15" cy="15" r="5.500" fill="#4285f4"/></svg></span>
  <span class="app run"><svg width="30" height="30" viewBox="0 0 30 30"><circle cx="15" cy="15" r="15" fill="#5865f2"/><path d="M6 20Q6 12 9 9l4-1 1 1.500h3L18 8l4 1q3 3 4 11l-5 3-1.500-2h-7L11 23z" fill="#fff"/><circle cx="12" cy="15.500" r="2" fill="#5865f2"/><circle cx="22" cy="22.500" r="9" fill="#ee4b54"/><text x="18" y="27.800" class="cnt">9</text></svg></span>
  <span class="fill"></span>
  <svg width="17" height="10" viewBox="0 0 17 10"><path d="m1 9 7.500-8L16 9" fill="none" stroke="#eee" stroke-width="1.500"/></svg>
  <svg width="17" height="17" viewBox="0 0 17 17" fill="none" stroke="#ddd" stroke-width="1.400"><path d="M1 16Q2 3 16 1M5 16Q5 6 16 5M9 16q0-6 7-7"/><circle cx="14" cy="14" r="1.500" fill="#fff"/></svg>
  <svg width="20" height="15" viewBox="0 0 20 15"><path d="M5 3h13v10H5zM19 6v4" fill="none" stroke="#fff" stroke-width="1.500"/><path d="M7 5h6v6H7zM0 2h5v4H0zM2 6v7" fill="#fff" stroke="#fff"/></svg>
  <svg width="20" height="22" viewBox="0 0 20 22" fill="none" stroke="#eee" stroke-width="1.400"><path d="M7 11q-5-1-6 4 0 5 5 5 4-1 2-5M9 17 17 4q0-3-3-3L6 13v6zM13 12q6 0 6-3 0-2-4-2"/></svg>
  <div class="clock">11:08 PM<br>9/19/24</div>
  <svg width="32" height="32" viewBox="0 0 32 32"><path d="M2 2h20v16H12l-4 4v-4H2z" fill="#fff"/><path d="M6 6.500h12M6 10.500h12M6 14.500h8" stroke="#222" stroke-width="1.300"/><circle cx="21" cy="22" r="9.500" fill="#333" stroke="#888"/><text x="17" y="27" class="cnt">8</text></svg>
  <i class="edge"></i>
</footer>

<div class="thumb"><svg class="mini" viewBox="0 0 30 30"><path d="m2 6 11-6 15 4v17l-9 8L2 24z" fill="#c11a1d"/><path d="m2 6 11-6 15 4-10 5z" fill="#ee4a45"/><path d="m18 9 10-5v17l-9 8z" fill="#8d0d10"/><text x="2.500" y="20" class="swtext">SW</text></svg><svg width="11" height="12" viewBox="0 0 11 12"><path d="M1 3h7v8H1zM3 3V1h7v8H8" fill="none" stroke="#444"/></svg><svg width="12" height="12" viewBox="0 0 12 12"><path d="M.5.500h11v11H.5z" fill="none" stroke="#ddd"/></svg><svg width="13" height="13" viewBox="0 0 13 13"><path d="m1 1 11 11M12 1 1 12" stroke="#888"/></svg></div>
</body>
</html>
```
FILE: styles.css
```css
* { box-sizing: border-box; }
body {
  margin: 0; width: 1920px; height: 1080px; overflow: hidden;
  display: grid; grid-template-rows: 40px 82px 866px 20px 22px 50px;
  background: #f7f7f7; color: #111;
  font: 14px/19px "Open Sans", "Noto Sans", sans-serif;
  letter-spacing: -0.45px;
}
.defs { position: absolute; }
svg { display: block; overflow: visible; }
.i { width: 20px; height: 20px; }
.d { width: 6px; height: 4px; color: #333; }
.d.dim { color: #aaa; }
.d.grey { color: #888; }

/* title bar */
.titlebar {
  display: grid; grid-template-columns: 146px 19px 475px 815px 252px 1fr; align-items: center;
  border-top: 1px solid #bdbdbd; border-bottom: 1px solid #bdbdbd;
}
.brand { display: flex; align-items: center; height: 38px; padding: 0 7px 2px 5px; border-right: 1px solid #bdbdbd; }
.logo { margin: 2px 0 0 4px; color: #da2419; font: italic 13px/20px "Open Sans", sans-serif; letter-spacing: 0.25px; white-space: nowrap; }
.logo b { font-weight: 800; }
.play { margin-left: auto; }
.qat {
  grid-column: 3; display: grid; align-items: center; justify-items: center; height: 38px; padding-bottom: 1px;
  grid-template-columns: 33px 33px 14px 33px 14px 33px 14px 33px 14px 33px 14px 33px 14px 1px 32px 14px 34px 32px 34px 14px;
}
.select, .selectmore { display: grid; place-items: center; width: 100%; height: 32px; border: 1px solid #6f6f6f; background: #b1b1b1; }
.selectmore { background: #f7f7f7; border: 1px solid #8a8a8a; border-left: 0; }
.doc { margin: 1px 1px 0 0; font-size: 14px; font-weight: 400; text-align: center; }
.search { display: flex; align-items: center; height: 29px; border: 1px solid #bdbdbd; background: #fff; padding: 0 4px 0 6px; color: #666; }
.search span { margin: 1px auto 0 8px; }
.search .d { margin-left: 9px; width: 8px; height: 5px; }
.winctl { display: grid; grid-template-columns: 48px 34px 48px 34px 46px; justify-items: center; align-items: center; color: #333; }

/* ribbon */
.ribbon {
  display: grid; border-bottom: 1px solid #808080; padding: 1px 0 2px;
  grid-template-columns: 88px 124px 46px 106px 178px 64px 126px 94px 69px 73px 89px 69px 102px 71px 124px 70px 102px 1fr;
}
.cmd { display: grid; grid-template-rows: 22px 38px 1fr; justify-items: center; padding-top: 5px; text-align: center; white-space: nowrap; }
.cmd span { margin-top: -2px; }
.cmd .d { margin-top: 1px; }
.sep { border-right: 1px solid #c3c3c3; }
.off { color: #b9b9b9; }
.on { background: #b1b1b1; border: 1px solid #6a6a6a; padding-top: 4px; }
.collapse { display: flex; justify-content: flex-end; align-items: flex-end; padding: 0 9px 8px; }

/* work area */
.work {
  position: relative; display: grid; grid-template: 28px 1fr / 459px 1fr;
  background:
    radial-gradient(ellipse 960px 430px at 560px 60px, #fff 0, #fff 40%, rgba(255,255,255,0) 100%),
    radial-gradient(ellipse 420px 420px at 1920px 0, rgba(243,245,248,.9) 0, rgba(243,245,248,0) 100%),
    linear-gradient(90deg, rgba(255,255,255,.15) 450px, rgba(255,255,255,0) 1500px, rgba(255,255,255,.4) 1920px),
    linear-gradient(#e2e6ef 0, #dbdfeb 300px, #dbdfea 440px, #f1f3f7 520px, #fff 600px, #fff 700px, #f6f7fa 866px);
}
.scene { grid-area: 1 / 1 / -1 / -1; }
.axis { font: 13px "Open Sans", sans-serif; }
.toprow { grid-area: 1 / 1 / 2 / -1; display: grid; grid-template-columns: 1009px 1fr 130px 7px; align-items: center; }
.tabs { display: grid; grid-template-columns: 89px 63px 62px 70px 74px 172px 57px 157px; font-size: 15px; line-height: 26px; letter-spacing: -0.3px; text-align: center; white-space: nowrap; color: #222; }
.tabs > * { height: 28px; border-right: 1px solid #808080; border-bottom: 1px solid #808080; background: #d4d4d4; }
.tabs .cam { padding-right: 4px; }
.tabs b { background: #f7f7f7; border-bottom-color: #f7f7f7; letter-spacing: -0.5px; }
.hud { display: grid; align-items: center; justify-items: center; justify-content: start; padding-top: 2px; grid-template-columns: 26px 26px 26px 26px 26px 26px 14px 28px 12px 28px 12px 26px 26px 14px 27px 14px; }
.docctl { display: grid; grid-template-columns: repeat(5, 26px); align-items: center; justify-items: center; padding: 2px 1px 0 0; color: #999; }

/* feature manager */
.panel { grid-area: 2 / 1; display: grid; grid-template-rows: 25px 30px 32px 720px 5px 22px 1fr; background: #f7f7f7; border-right: 1px solid #808080; }
.dot { display: block; width: 6px; height: 6px; border-radius: 3px; border: 1px solid #999; background: #c8c8c8; }
.grip { display: grid; place-items: center; border-top: 1px solid #9db8bb; border-bottom: 1px solid #c3c3c3; background: linear-gradient(#c3c3c3, #c3c3c3) 0 3px / 100% 1px no-repeat; padding: 3px 2px 0 0; }
.ptabs { display: grid; grid-template-columns: 42px repeat(7, 40px) 1fr; padding-top: 4px; border-bottom: 1px solid #a8a8a8; }
.ptabs span { display: grid; place-items: center; border: 1px solid #808080; border-width: 1px 1px 0 0; background: #d4d4d4; }
.ptabs .cur { background: #f7f7f7; padding-left: 3px; }
.ptabs .shade svg { background: #a9a9ad; }
.more { place-self: center end; margin: 0 8px 2px 0; }
.filter { display: flex; gap: 1px; align-items: center; margin: 0 5px 0 5px; padding: 0 0 0 2px; border: 1px solid #bdbdbd; }
.filter svg + svg { margin-top: 8px; color: #333; }
.treebox { display: grid; grid-template-columns: 435px 19px; justify-content: start; gap: 1px; border-left: 1px solid #bdbdbd; }
.tree { list-style: none; margin: 0; padding: 0; overflow: hidden; font-size: 15px; line-height: 24px; letter-spacing: -0.22px; word-spacing: 1px; white-space: nowrap; color: #000; }
.tree li { display: flex; align-items: center; height: 24px; padding-left: 49px; }
.tree .snug { letter-spacing: -0.33px; word-spacing: 0; }
.tree .dense { letter-spacing: -0.43px; word-spacing: 0; }
.tree svg { width: 18px; height: 18px; flex: none; margin-right: 5px; }
.tree .e { width: 14px; height: 14px; margin: 0 7px 0 3px; }
.bad { color: #c80000; --m: #bcbcbc; --n: #b0b0b0; }
.tree .sel { height: 24px; margin-left: 46px; padding-left: 2px; border: 1px solid #808080; border-right: 0; background: #fff; }
.vscroll { display: grid; grid-template-rows: 20px 1fr 121px 16px; place-items: center; background: #f0f0f0; }
.vscroll i { grid-row: 3; width: 100%; height: 100%; background: #c1c1c1; }
.vscroll .last { grid-row: 4; margin-top: 4px; }
.panel::after { content: ""; grid-row: 5; grid-column: 1; width: 436px; height: 4px; background: #3389c2; }
.hscroll { grid-row: 6; display: grid; grid-template-columns: 22px 205px 1fr 22px 20px; place-items: center; background: #f0f0f0; margin: 1px 2px 2px 0; }
.hscroll i { width: 100%; height: 100%; background: #cdcdcd; }
.hscroll svg:last-child { grid-column: 4; }
.pfoot { grid-row: 7; border-top: 1px solid #b0b0b0; }
.splitter { position: absolute; left: 458px; top: 408px; width: 12px; height: 49px; display: grid; place-items: center; padding-right: 2px; background: #f7f7f7; border: 1px solid #808080; border-left: 0; }
.taskpane { position: absolute; right: 0; top: 58px; display: grid; grid-auto-rows: 30px; width: 33px; border: 1px solid #808080; border-width: 1px 0 0 1px; }
.taskpane span { display: grid; place-items: center; padding-bottom: 1px; background: #d4d4d4; border-bottom: 1px solid #808080; }
.taskpane .cur { background: #fafafa; }
.tip { position: absolute; left: 1154px; top: 758px; width: 188px; height: 25px; padding-left: 5px; border: 1px solid #767676; background: #fff; box-shadow: 4px 4px 2px -1px rgba(0,0,0,.45); color: #575757; font-size: 15px; line-height: 22px; letter-spacing: -0.4px; word-spacing: 1px; white-space: nowrap; }

/* sheet tabs and status */
.sheets { display: grid; grid-template-columns: 83px 76px 89px 144px 1fr; border-top: 1px solid #808080; border-bottom: 1px solid #808080; font-size: 15px; line-height: 18px; letter-spacing: -0.2px; text-align: center; }
.sheets span { background: #d4d4d4; border-right: 1px solid #808080; }
.sheets .study { text-align: left; padding-left: 13px; letter-spacing: 0.08px; }
.sheets b { border-right: 1px solid #808080; }
.arrows { display: grid; grid-template-columns: repeat(4, 20px); padding-left: 2px; border-top: 1px solid #000; }
.arrows i { background: #a6a6bd; border-right: 1px solid #55556a; }
.status { display: grid; grid-template-columns: 1445px 115px 150px 89px 70px 33px 1fr; align-items: center; font-size: 15px; line-height: 22px; letter-spacing: -0.4px; white-space: nowrap; overflow: hidden; padding-top: 2px; }
.status svg { margin-top: -4px; }
.s3 { margin-left: -8px; }
.s1 { letter-spacing: -0.3px; }
.s2 { letter-spacing: -0.3px; }

/* taskbar */
.taskbar { display: grid; align-items: center; justify-items: center; background: #1f1f1f; color: #fff; grid-template-columns: 60px 360px 58px 11px 51px 73px 51px 6px 61px 6px 51px 11px 51px 758px 36px 46px 32px 58px 70px 64px 6px; }
.tsearch { width: 100%; height: 50px; display: flex; align-items: center; background: #323232; border: 1px solid #555; border-width: 1px 1px 0 0; padding-left: 14px; font-size: 18px; letter-spacing: -0.1px; color: #d6d6d6; }
.tsearch span { margin: 0 auto 1px 14px; }
.app { height: 50px; width: 100%; display: grid; place-items: center; padding-right: 2px; }
.app.view { padding: 0 0 2px 2px; }
.run { border-bottom: 3px solid #76b9ed; padding-top: 3px; }
.first { grid-column: 5; }
.hot { background: #4b4b4b; grid-column: 9; }
.hot + .app { grid-column: 11; }
.hot + .app + .app { grid-column: 13; }
.clock { text-align: center; font-size: 15px; line-height: 23px; letter-spacing: -0.6px; white-space: nowrap; padding-bottom: 2px; }
.edge { height: 50px; width: 1px; background: #777; justify-self: start; }
.swtext { font: 800 13px "Open Sans", sans-serif; fill: #fff; letter-spacing: 0; }
.swyear { font: 800 8px "Open Sans", sans-serif; fill: #fff; letter-spacing: -.3px; }
.cnt { font: 600 14px "Open Sans", sans-serif; fill: #fff; }

/* small floating window over the sheet tabs */
.thumb { position: absolute; left: 9px; top: 997px; width: 181px; height: 33px; display: grid; grid-template-columns: 21px 11px 97px 1fr; align-items: center; padding-left: 8px; background: #fff; box-shadow: 0 0 3px rgba(0,0,0,.45); }
.thumb svg:nth-child(3) { justify-self: center; margin-left: 8px; }
.thumb svg:nth-child(4) { margin-left: 7px; }
.mini { width: 21px; height: 21px; }
```
